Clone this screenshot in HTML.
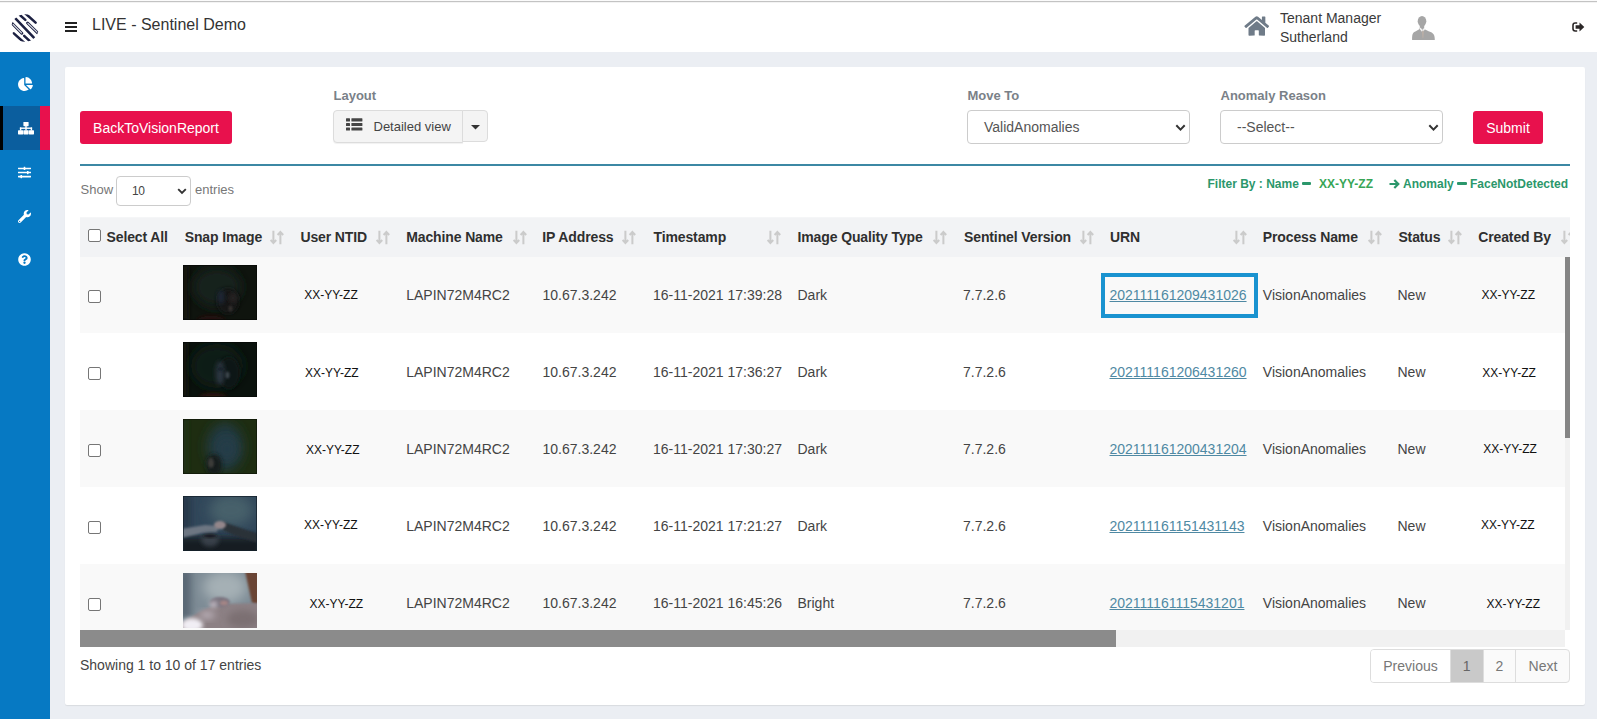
<!DOCTYPE html>
<html>
<head>
<meta charset="utf-8">
<title>LIVE - Sentinel Demo</title>
<style>
*{box-sizing:border-box;margin:0;padding:0}
html,body{width:1597px;height:719px;overflow:hidden}
body{font-family:"Liberation Sans",sans-serif;background:#ebeef3;color:#333;position:relative;font-size:14px}
.abs{position:absolute}
#topbar{left:0;top:0;width:1597px;height:52px;background:linear-gradient(#fbfbfb 0,#fbfbfb 1px,#c3c3c3 1px,#c3c3c3 2px,#f3f3f3 2px,#f3f3f3 3px,#fff 3px)}
#sidebar{left:0;top:52px;width:50px;height:667px;background:#0679c3}
#side-active{left:0;top:106px;width:50px;height:44px;background:#0b5e9e}
#side-active-l{left:0;top:106px;width:3px;height:44px;background:#000}
#side-active-r{left:40px;top:106px;width:10px;height:44px;background:#e8114d}
#card{left:65px;top:67px;width:1520px;height:638px;background:#fff;border-radius:2px;box-shadow:0 1px 1px rgba(0,0,0,.08)}
.title{left:92px;top:16.400px;font-size:16px;color:#333;white-space:nowrap}
.btn-red span{position:relative;top:1px}
.btn-red{background:#e8114d;color:#fff;border-radius:3px;font-size:14px;text-align:center;white-space:nowrap}
.lbl{font-size:13px;font-weight:bold;color:#7a8188;white-space:nowrap}
.sel{border:1px solid #ccc;border-radius:4px;background:#fff;color:#555;font-size:14px;white-space:nowrap}
.flt{top:177px;font-size:12px;line-height:14px;font-weight:bold;color:#2b976b;white-space:nowrap}
.hr{left:80px;top:164px;width:1490px;height:2px;background:#3c88a4}
.th{letter-spacing:-0.120px;font-size:14px;line-height:16px;font-weight:bold;color:#2f2f2f;white-space:nowrap;top:229.200px}
.td{font-size:14px;line-height:16px;color:#444;white-space:nowrap}
.nt{font-size:12px;line-height:14px;color:#111;white-space:nowrap}
.urn{font-size:14px;line-height:16px;color:#4f89a3;text-decoration:underline;white-space:nowrap}
.row{left:80px;width:1485px;height:77px}
.odd{background:#f9f9f9}
.even{background:#fff}
.cb{width:13px;height:13px;border:1px solid #767676;border-radius:2px;background:#fff}
.img{left:183px;width:74px;height:55px}
.pg{top:0;height:32px;line-height:32px;text-align:center;font-size:14px;color:#777}
.sort{top:229px;width:14px;height:16px}
</style>
</head>
<body>
<svg width="0" height="0" style="position:absolute"><defs>
<filter id="b2" x="-50%" y="-50%" width="200%" height="200%"><feGaussianBlur stdDeviation="2"/></filter>
<filter id="b3" x="-50%" y="-50%" width="200%" height="200%"><feGaussianBlur stdDeviation="3.500"/></filter>
<filter id="b5" x="-50%" y="-50%" width="200%" height="200%"><feGaussianBlur stdDeviation="6"/></filter>
<filter id="b1" x="-50%" y="-50%" width="200%" height="200%"><feGaussianBlur stdDeviation="1.200"/></filter>
</defs></svg>
<div id="topbar" class="abs"></div>
<div id="sidebar" class="abs"></div>
<div id="side-active" class="abs"></div>
<div id="side-active-l" class="abs"></div>
<div id="side-active-r" class="abs"></div>
<div id="card" class="abs"></div>
<div class="abs title">LIVE - Sentinel Demo</div>

<!-- logo -->
<svg class="abs" style="left:0;top:0" width="52" height="52" viewBox="0 0 52 52">
 <clipPath id="lg"><circle cx="25" cy="28" r="13.700"/></clipPath>
 <g clip-path="url(#lg)">
 <g stroke="#1d2142" stroke-width="2.500" stroke-linecap="round" fill="none">
  <line x1="25.200" y1="13.200" x2="35.600" y2="22.600"/>
  <line x1="18.800" y1="14" x2="25.300" y2="19.900"/>
  <line x1="14.200" y1="17.100" x2="36" y2="39.900"/>
  <line x1="24.200" y1="35.800" x2="30.900" y2="42.100"/>
  <line x1="13.800" y1="33.400" x2="24.200" y2="42.800"/>
 </g>
 <g stroke="#1d2142" stroke-width="2.900" stroke-linecap="round" fill="none">
  <line x1="27.600" y1="23" x2="39.200" y2="34.400"/>
  <line x1="10.900" y1="22.200" x2="21.800" y2="33.200"/>
 </g>
 <g stroke="#e4e6ee" stroke-width="1.100" stroke-linecap="round" fill="none">
  <line x1="27.900" y1="23.300" x2="37" y2="32.200"/>
  <line x1="13.100" y1="24.400" x2="21.500" y2="32.900"/>
 </g>
 </g>
</svg>
<!-- hamburger -->
<div class="abs" style="left:65px;top:22px;width:12px;height:2px;background:#222"></div>
<div class="abs" style="left:65px;top:26px;width:12px;height:2px;background:#222"></div>
<div class="abs" style="left:65px;top:30px;width:12px;height:2px;background:#222"></div>
<!-- home -->
<svg class="abs" style="left:1243.500px;top:15px" width="25.500" height="22" viewBox="0 0 576 512"><path fill="#6f7b88" d="M280.37 148.26L96 300.11V464a16 16 0 0 0 16 16l112.06-.29a16 16 0 0 0 15.92-16V368a16 16 0 0 1 16-16h64a16 16 0 0 1 16 16v95.64a16 16 0 0 0 16 16.05L464 480a16 16 0 0 0 16-16V300L295.67 148.26a12.19 12.19 0 0 0-15.3 0zM571.6 251.47L488 182.56V44.05a12 12 0 0 0-12-12h-56a12 12 0 0 0-12 12v72.61L318.47 43a48 48 0 0 0-61 0L4.34 251.47a12 12 0 0 0-1.6 16.9l25.5 31A12 12 0 0 0 45.15 301l235.22-193.74a12.19 12.19 0 0 1 15.3 0L530.9 301a12 12 0 0 0 16.9-1.6l25.5-31a12 12 0 0 0-1.7-16.93z"/></svg>
<div class="abs" style="left:1280px;top:9px;font-size:14px;line-height:19px;color:#3a3a3a;white-space:nowrap">Tenant Manager<br>Sutherland</div>
<!-- avatar -->
<svg class="abs" style="left:1411px;top:15px" width="26" height="26" viewBox="0 0 26 26">
 <g fill="#a6a6a6"><ellipse cx="11" cy="6.300" rx="4.300" ry="5.300"/><rect x="8.800" y="9" width="4.400" height="5"/>
 <path d="M1.100 24.900C1.100 20.500 1.300 18.300 3.300 17 5.300 15.800 8 15 8.900 13.200L13.100 13.200C14 15 16.800 15.800 19.600 17 22.800 18.300 23.800 20.500 23.800 24.900Z"/></g>
 <path fill="#fff" d="M8.600 13.900l2.500 3.200.9-1.600-2.500-3z M13.400 12.500l-2.500 3 .9 1.600 2.500-3.200z" opacity=".85"/>
 <path fill="#b9aea6" d="M11.400 15.600l1 0 .5 1.300-.5 5.600-.5.800-.5-.8-.5-5.600z"/>
</svg>
<!-- logout -->
<svg class="abs" style="left:1572px;top:22px" width="12.500" height="10" viewBox="0 0 12.500 10">
 <path fill="none" stroke="#2b2727" stroke-width="1.600" d="M5.200 1H3.200c-1.300 0-2.200.9-2.200 2.200v3.600c0 1.300.9 2.200 2.200 2.200h2"/>
 <path fill="#2b2727" d="M3.600 3.300h3.900V0.600L12.300 5l-4.800 4.400V6.700H3.600z"/>
</svg>


<svg class="abs" style="left:17.5px;top:76.5px" width="15" height="14" viewBox="0 0 544 512"><path fill="#fff" d="M527.79 288H290.5l158.03 158.03c6.040 6.040 15.980 6.530 22.190.680 38.700-36.460 65.320-85.610 73.130-140.860 1.340-9.460-6.510-17.850-16.060-17.850zm-15.830-64.800C503.720 103.740 408.260 8.280 288.800.040 279.680-.59 272 7.100 272 16.240V240h223.770c9.140 0 16.820-7.680 16.190-16.800zM224 288V50.710c0-9.550-8.390-17.400-17.840-16.060C86.990 51.490-4.100 155.600.14 280.370 4.500 408.510 114.830 513.590 243.030 511.980c50.400-.63 96.970-16.870 135.260-44.030 7.900-5.600 8.420-17.230 1.570-24.080L224 288z"/></svg>
<svg class="abs" style="left:17.500px;top:122px" width="16" height="12.500" viewBox="0 0 16 12.500"><g fill="#fff"><rect x="5.400" y="0" width="5.200" height="4.200" rx=".6"/><rect x="7.300" y="4" width="1.400" height="2.200"/><rect x="1.900" y="5.500" width="12.200" height="1.400"/><rect x="1.900" y="5.500" width="1.400" height="3"/><rect x="7.300" y="6" width="1.400" height="2.500"/><rect x="12.700" y="5.500" width="1.400" height="3"/><rect x="0" y="8.200" width="5.200" height="4.200" rx=".6"/><rect x="5.400" y="8.200" width="5.200" height="4.200" rx=".6"/><rect x="10.800" y="8.200" width="5.200" height="4.200" rx=".6"/></g></svg>
<svg class="abs" style="left:18px;top:166px" width="13" height="13" viewBox="0 0 512 512"><path fill="#fff" d="M496 384H160v-16c0-8.800-7.200-16-16-16h-32c-8.800 0-16 7.200-16 16v16H16c-8.800 0-16 7.200-16 16v32c0 8.800 7.200 16 16 16h80v16c0 8.800 7.200 16 16 16h32c8.800 0 16-7.200 16-16v-16h336c8.800 0 16-7.200 16-16v-32c0-8.800-7.200-16-16-16zm0-160h-80v-16c0-8.800-7.200-16-16-16h-32c-8.800 0-16 7.200-16 16v16H16c-8.800 0-16 7.200-16 16v32c0 8.800 7.200 16 16 16h336v16c0 8.800 7.200 16 16 16h32c8.800 0 16-7.200 16-16v-16h80c8.800 0 16-7.200 16-16v-32c0-8.800-7.200-16-16-16zm0-160H288V48c0-8.800-7.200-16-16-16h-32c-8.800 0-16 7.200-16 16v16H16C7.200 64 0 71.200 0 80v32c0 8.800 7.200 16 16 16h208v16c0 8.800 7.200 16 16 16h32c8.800 0 16-7.200 16-16v-16h208c8.800 0 16-7.200 16-16V80c0-8.800-7.200-16-16-16z"/></svg>
<svg class="abs" style="left:18px;top:210px" width="13" height="13" viewBox="0 0 512 512"><path fill="#fff" d="M507.730 109.100c-2.240-9.030-13.540-12.090-20.120-5.510l-74.360 74.360-67.880-11.310-11.310-67.880 74.360-74.360c6.620-6.620 3.430-17.900-5.660-20.160-47.380-11.740-99.550.91-136.580 37.930-39.640 39.640-50.550 97.100-34.050 147.200L18.740 402.760c-24.990 24.990-24.990 65.510 0 90.500 24.990 24.990 65.510 24.990 90.500 0l213.210-213.210c50.120 16.710 107.470 5.680 147.370-34.220 37.070-37.070 49.700-89.320 37.910-136.730zM64 472c-13.250 0-24-10.750-24-24 0-13.260 10.750-24 24-24s24 10.740 24 24c0 13.250-10.750 24-24 24z"/></svg>
<svg class="abs" style="left:18px;top:253px" width="13" height="13" viewBox="0 0 512 512"><path fill="#fff" d="M504 256c0 136.997-111.043 248-248 248S8 392.997 8 256C8 119.083 119.043 8 256 8s248 111.083 248 248zM262.655 90c-54.497 0-89.255 22.957-116.549 63.758-3.536 5.286-2.353 12.415 2.715 16.258l34.699 26.310c5.205 3.947 12.621 3.008 16.665-2.122 17.864-22.658 30.113-35.797 57.303-35.797 20.429 0 45.698 13.148 45.698 32.958 0 14.976-12.363 22.667-32.534 33.976C247.128 238.528 216 254.941 216 296v4c0 6.627 5.373 12 12 12h56c6.627 0 12-5.373 12-12v-1.333c0-28.462 83.186-29.647 83.186-106.667 0-58.002-60.165-102-116.531-102zM256 338c-25.365 0-46 20.635-46 46 0 25.364 20.635 46 46 46s46-20.636 46-46c0-25.365-20.635-46-46-46z"/></svg>


<div class="abs btn-red" style="left:80px;top:111px;width:152px;height:33px;line-height:33px" id="b1"><span id="b1t">BackToVisionReport</span></div>
<div class="abs lbl" style="left:333.500px;top:88px" id="l1">Layout</div>
<div class="abs" style="left:333px;top:110px;width:130px;height:33px;background:#f4f4f4;border:1px solid #dcdcdc;border-radius:4px 0 0 4px;box-shadow:0 1px 1px rgba(0,0,0,.06)"></div>
<div class="abs" style="left:462px;top:110px;width:26px;height:32px;background:#f4f4f4;border:1px solid #dcdcdc;border-radius:0 4px 4px 0"></div>
<svg class="abs" style="left:346px;top:118px" width="17" height="13" viewBox="0 0 17 13"><g fill="#444"><rect x="0" y="0.300" width="4" height="3.100" rx=".5"/><rect x="5.400" y="0.300" width="11" height="3.100" rx=".5"/><rect x="0" y="4.900" width="4" height="3.100" rx=".5"/><rect x="5.400" y="4.900" width="11" height="3.100" rx=".5"/><rect x="0" y="9.500" width="4" height="3.100" rx=".5"/><rect x="5.400" y="9.500" width="11" height="3.100" rx=".5"/></g></svg>
<div class="abs" style="left:373.500px;top:119px;font-size:13px;line-height:16px;color:#444;white-space:nowrap" id="dv">Detailed view</div>
<svg class="abs" style="left:470.500px;top:124.500px" width="9" height="5" viewBox="0 0 9 5"><path d="M0 0h9L4.500 4.600z" fill="#333"/></svg>
<div class="abs lbl" style="left:967.500px;top:88px" id="l2">Move To</div>
<div class="abs sel" style="left:967px;top:110px;width:223px;height:34px"></div>
<div class="abs" style="left:984px;top:118.500px;font-size:14px;line-height:17px;color:#555;white-space:nowrap" id="va">ValidAnomalies</div>
<svg class="abs" style="left:1174.5px;top:123.5px" width="11" height="8" viewBox="0 0 11 8"><path d="M1.300 1.300L5.500 5.600L9.700 1.300" fill="none" stroke="#333" stroke-width="2"/></svg>
<div class="abs lbl" style="left:1220.500px;top:88px" id="l3">Anomaly Reason</div>
<div class="abs sel" style="left:1220px;top:110px;width:223px;height:34px"></div>
<div class="abs" style="left:1237px;top:118.500px;font-size:14px;line-height:17px;color:#555;white-space:nowrap" id="se">--Select--</div>
<svg class="abs" style="left:1427.5px;top:123.5px" width="11" height="8" viewBox="0 0 11 8"><path d="M1.300 1.300L5.500 5.600L9.700 1.300" fill="none" stroke="#333" stroke-width="2"/></svg>
<div class="abs btn-red" style="left:1473px;top:111px;width:70px;height:33px;line-height:33px" id="b2"><span id="b2t">Submit</span></div>
<div class="abs hr"></div>
<div class="abs" style="left:80.500px;top:182px;font-size:13px;line-height:16px;color:#777;white-space:nowrap" id="sh">Show</div>
<div class="abs sel" style="left:116px;top:176px;width:75px;height:30px"></div>
<div class="abs" style="left:132px;top:183.500px;font-size:12px;line-height:14px;color:#444;white-space:nowrap" id="ten"><span style="letter-spacing:-0.400px">10</span></div>
<svg class="abs" style="left:176.500px;top:187.500px" width="10" height="7" viewBox="0 0 10 7"><path d="M1.200 1.200L5 5L8.800 1.200" fill="none" stroke="#333" stroke-width="1.900"/></svg>
<div class="abs" style="left:195px;top:182px;font-size:13px;line-height:16px;color:#777;white-space:nowrap" id="en">entries</div>
<div class="abs flt" style="left:1207.500px" id="f1">Filter By : Name</div>
<div class="abs" style="left:1301.500px;top:182px;width:9.500px;height:2.500px;background:#2b976b;border-radius:1px"></div>
<div class="abs flt" style="left:1319px;color:#38a556" id="f2">XX-YY-ZZ</div>
<svg class="abs" style="left:1389px;top:179px" width="11" height="10" viewBox="0 0 11 10"><path d="M0.500 5H9M5.300 1L9.300 5L5.300 9" fill="none" stroke="#2b976b" stroke-width="2.200"/></svg>
<div class="abs flt" style="left:1403px" id="f3">Anomaly</div>
<div class="abs" style="left:1457px;top:182px;width:9.500px;height:2.500px;background:#2b976b;border-radius:1px"></div>
<div class="abs flt" style="left:1470px" id="f4">FaceNotDetected</div>

<div class="abs" style="left:80px;top:217px;width:1490px;height:40px;background:linear-gradient(#f8f9fa 0,#f2f3f5 1px)"></div>
<div class="abs row odd" style="top:257px;height:76px"></div>
<div class="abs row even" style="top:333px;height:77px"></div>
<div class="abs row odd" style="top:410px;height:77px"></div>
<div class="abs row even" style="top:487px;height:77px"></div>
<div class="abs row odd" style="top:564px;height:66px"></div>
<div class="abs cb" style="left:88px;top:290.0px"></div>
<svg class="abs" style="left:183px;top:265px" width="74" height="55" viewBox="0 0 74 55"><clipPath id="cp0"><rect width="74" height="55"/></clipPath><g clip-path="url(#cp0)"><rect width="74" height="55" fill="#0f140e"/>
<rect x="-3" y="0" width="9" height="55" fill="#17180b" filter="url(#b2)"/>
<ellipse cx="34" cy="22" rx="24" ry="20" fill="#16201b" filter="url(#b5)"/>
<ellipse cx="45" cy="36" rx="11" ry="13" fill="#121617" filter="url(#b2)"/>
<ellipse cx="38" cy="32" rx="3.500" ry="7" fill="#1c2836" filter="url(#b2)"/>
<ellipse cx="50" cy="33" rx="4.500" ry="4.500" fill="#272120" filter="url(#b2)"/>
<ellipse cx="47.500" cy="43.500" rx="2" ry="3" fill="#34302f" filter="url(#b1)"/>
<ellipse cx="28" cy="56" rx="14" ry="5" fill="#28110d" filter="url(#b2)"/>
<rect x="0" y="0" width="74" height="55" fill="none" stroke="#080a07" stroke-width="1.500"/></g></svg>
<div class="abs nt" style="left:304.2px;top:288.2px" id="n0">XX-YY-ZZ</div>
<div class="abs td" style="left:406.200px;top:286.7px" id="m0">LAPIN72M4RC2</div>
<div class="abs td" style="left:542.500px;top:286.7px" id="ip0">10.67.3.242</div>
<div class="abs td" style="left:653px;top:286.7px" id="ts0">16-11-2021 17:39:28</div>
<div class="abs td" style="left:797.500px;top:286.7px" id="q0">Dark</div>
<div class="abs td" style="left:963px;top:286.7px" id="v0">7.7.2.6</div>
<div class="abs urn" style="left:1109.500px;top:286.7px" id="u0">202111161209431026</div>
<div class="abs td" style="left:1262.800px;top:286.7px" id="p0">VisionAnomalies</div>
<div class="abs td" style="left:1397.500px;top:286.7px" id="s0">New</div>
<div class="abs nt" style="left:1481.4px;top:288.2px" id="c0">XX-YY-ZZ</div>
<div class="abs cb" style="left:88px;top:367.0px"></div>
<svg class="abs" style="left:183px;top:342px" width="74" height="55" viewBox="0 0 74 55"><clipPath id="cp1"><rect width="74" height="55"/></clipPath><g clip-path="url(#cp1)"><rect width="74" height="55" fill="#0a120d"/>
<rect x="-3" y="0" width="8" height="55" fill="#13150a" filter="url(#b2)"/>
<ellipse cx="34" cy="24" rx="26" ry="22" fill="#0e1c16" filter="url(#b5)"/>
<ellipse cx="46" cy="31" rx="11" ry="16" fill="#0d1312" filter="url(#b2)"/>
<ellipse cx="37" cy="31" rx="4.500" ry="12" fill="#2a3641" filter="url(#b2)"/>
<ellipse cx="37.500" cy="27" rx="3" ry="2" fill="#18202a" filter="url(#b1)"/>
<ellipse cx="44.500" cy="33" rx="2" ry="3.500" fill="#3e464e" filter="url(#b1)"/>
<ellipse cx="30" cy="56" rx="14" ry="5" fill="#2d130e" filter="url(#b2)"/>
<rect x="0" y="0" width="74" height="55" fill="none" stroke="#070a07" stroke-width="1.500"/></g></svg>
<div class="abs nt" style="left:305.0px;top:365.7px" id="n1">XX-YY-ZZ</div>
<div class="abs td" style="left:406.200px;top:363.7px" id="m1">LAPIN72M4RC2</div>
<div class="abs td" style="left:542.500px;top:363.7px" id="ip1">10.67.3.242</div>
<div class="abs td" style="left:653px;top:363.7px" id="ts1">16-11-2021 17:36:27</div>
<div class="abs td" style="left:797.500px;top:363.7px" id="q1">Dark</div>
<div class="abs td" style="left:963px;top:363.7px" id="v1">7.7.2.6</div>
<div class="abs urn" style="left:1109.500px;top:363.7px" id="u1">202111161206431260</div>
<div class="abs td" style="left:1262.800px;top:363.7px" id="p1">VisionAnomalies</div>
<div class="abs td" style="left:1397.500px;top:363.7px" id="s1">New</div>
<div class="abs nt" style="left:1482.3px;top:365.7px" id="c1">XX-YY-ZZ</div>
<div class="abs cb" style="left:88px;top:444.0px"></div>
<svg class="abs" style="left:183px;top:419px" width="74" height="55" viewBox="0 0 74 55"><clipPath id="cp2"><rect width="74" height="55"/></clipPath><g clip-path="url(#cp2)"><rect width="74" height="55" fill="#1e2d11"/>
<ellipse cx="42" cy="28" rx="18" ry="24" fill="#223a44" filter="url(#b5)"/>
<ellipse cx="44" cy="30" rx="8" ry="10" fill="#253d48" filter="url(#b5)"/>
<rect x="-3" y="0" width="8" height="55" fill="#243212" filter="url(#b2)"/>
<ellipse cx="31" cy="46" rx="8" ry="11" fill="#191e1d" filter="url(#b2)"/>
<ellipse cx="28" cy="44" rx="3" ry="5" fill="#3a3b39" filter="url(#b1)"/>
<rect x="0" y="0" width="74" height="55" fill="none" stroke="#101808" stroke-width="1.500"/></g></svg>
<div class="abs nt" style="left:305.9px;top:442.7px" id="n2">XX-YY-ZZ</div>
<div class="abs td" style="left:406.200px;top:440.7px" id="m2">LAPIN72M4RC2</div>
<div class="abs td" style="left:542.500px;top:440.7px" id="ip2">10.67.3.242</div>
<div class="abs td" style="left:653px;top:440.7px" id="ts2">16-11-2021 17:30:27</div>
<div class="abs td" style="left:797.500px;top:440.7px" id="q2">Dark</div>
<div class="abs td" style="left:963px;top:440.7px" id="v2">7.7.2.6</div>
<div class="abs urn" style="left:1109.500px;top:440.7px" id="u2">202111161200431204</div>
<div class="abs td" style="left:1262.800px;top:440.7px" id="p2">VisionAnomalies</div>
<div class="abs td" style="left:1397.500px;top:440.7px" id="s2">New</div>
<div class="abs nt" style="left:1483.3px;top:442.2px" id="c2">XX-YY-ZZ</div>
<div class="abs cb" style="left:88px;top:521.0px"></div>
<svg class="abs" style="left:183px;top:496px" width="74" height="55" viewBox="0 0 74 55"><clipPath id="cp3"><rect width="74" height="55"/></clipPath><g clip-path="url(#cp3)"><rect width="74" height="55" fill="#31475a"/>
<ellipse cx="48" cy="14" rx="22" ry="16" fill="#47606a" filter="url(#b5)"/>
<rect x="-4" y="-2" width="12" height="36" fill="#25384a" filter="url(#b3)"/>
<rect x="-5" y="41" width="84" height="22" fill="#121b24" filter="url(#b3)"/>
<path d="M40 26L52 30L76 38L76 47L50 39L40 34z" fill="#2b3038" filter="url(#b1)"/>
<path d="M-2 33L22 29L36 30L34 36L20 37L-2 42z" fill="#6d7682" filter="url(#b1)"/>
<ellipse cx="37" cy="29" rx="6" ry="4" fill="#93868a" filter="url(#b1)"/>
<ellipse cx="27" cy="44" rx="9" ry="6.500" fill="#394048" filter="url(#b2)"/>
<ellipse cx="27" cy="40" rx="7" ry="1.500" fill="#14181d" filter="url(#b1)"/>
<rect x="0" y="0" width="74" height="55" fill="none" stroke="#16222c" stroke-width="1.500"/></g></svg>
<div class="abs nt" style="left:304.1px;top:518.0px" id="n3">XX-YY-ZZ</div>
<div class="abs td" style="left:406.200px;top:517.7px" id="m3">LAPIN72M4RC2</div>
<div class="abs td" style="left:542.500px;top:517.7px" id="ip3">10.67.3.242</div>
<div class="abs td" style="left:653px;top:517.7px" id="ts3">16-11-2021 17:21:27</div>
<div class="abs td" style="left:797.500px;top:517.7px" id="q3">Dark</div>
<div class="abs td" style="left:963px;top:517.7px" id="v3">7.7.2.6</div>
<div class="abs urn" style="left:1109.500px;top:517.7px" id="u3">202111161151431143</div>
<div class="abs td" style="left:1262.800px;top:517.7px" id="p3">VisionAnomalies</div>
<div class="abs td" style="left:1397.500px;top:517.7px" id="s3">New</div>
<div class="abs nt" style="left:1481.1px;top:517.7px" id="c3">XX-YY-ZZ</div>
<div class="abs cb" style="left:88px;top:598.0px"></div>
<svg class="abs" style="left:183px;top:573px" width="74" height="55" viewBox="0 0 74 55"><clipPath id="cp4"><rect width="74" height="55"/></clipPath><g clip-path="url(#cp4)"><rect width="74" height="55" fill="#7d8b95"/>
<ellipse cx="42" cy="14" rx="22" ry="16" fill="#a5b0b5" filter="url(#b5)"/>
<rect x="-6" y="-4" width="14" height="50" fill="#5a6874" filter="url(#b3)"/>
<path d="M62 -2L78 -2L78 33L69 30z" fill="#6b4534" filter="url(#b1)"/>
<path d="M-2 51L8 44L20 37L30 33L45 31L76 30L76 60L-2 60z" fill="#8c8084" filter="url(#b1)"/>
<ellipse cx="60" cy="46" rx="16" ry="9" fill="#7b6f72" filter="url(#b3)"/>
<ellipse cx="37" cy="29" rx="10" ry="5" fill="#7b7480" filter="url(#b1)"/>
<ellipse cx="30.500" cy="31.500" rx="4" ry="3.500" fill="#b9b1ba" filter="url(#b2)"/>
<ellipse cx="41" cy="30" rx="4" ry="2.500" fill="#a38485" filter="url(#b1)"/>
<ellipse cx="9" cy="52" rx="11" ry="7" fill="#f1eef4" filter="url(#b2)"/>
<ellipse cx="24" cy="42" rx="8" ry="4" fill="#b8aeb6" filter="url(#b3)"/></g></svg>
<div class="abs nt" style="left:309.5px;top:597.2px" id="n4">XX-YY-ZZ</div>
<div class="abs td" style="left:406.200px;top:594.7px" id="m4">LAPIN72M4RC2</div>
<div class="abs td" style="left:542.500px;top:594.7px" id="ip4">10.67.3.242</div>
<div class="abs td" style="left:653px;top:594.7px" id="ts4">16-11-2021 16:45:26</div>
<div class="abs td" style="left:797.500px;top:594.7px" id="q4">Bright</div>
<div class="abs td" style="left:963px;top:594.7px" id="v4">7.7.2.6</div>
<div class="abs urn" style="left:1109.500px;top:594.7px" id="u4">202111161115431201</div>
<div class="abs td" style="left:1262.800px;top:594.7px" id="p4">VisionAnomalies</div>
<div class="abs td" style="left:1397.500px;top:594.7px" id="s4">New</div>
<div class="abs nt" style="left:1486.4px;top:596.7px" id="c4">XX-YY-ZZ</div>
<div class="abs cb" style="left:88px;top:229px"></div>
<div class="abs th" style="left:106.5px" id="h0">Select All</div>
<div class="abs th" style="left:184.7px" id="h1">Snap Image</div>
<svg class="abs" style="left:270.2px;top:229.500px" width="15" height="15" viewBox="0 0 15 15"><g fill="none" stroke="#cbcbcb" stroke-width="2"><path d="M3.400 0.800V12.500M0.600 10L3.400 13L6.200 10"/><path d="M10.400 14.200V2.500M7.600 5L10.400 2L13.200 5"/></g></svg>
<div class="abs th" style="left:300.4px" id="h2">User NTID</div>
<svg class="abs" style="left:376px;top:229.500px" width="15" height="15" viewBox="0 0 15 15"><g fill="none" stroke="#cbcbcb" stroke-width="2"><path d="M3.400 0.800V12.500M0.600 10L3.400 13L6.200 10"/><path d="M10.400 14.200V2.500M7.600 5L10.400 2L13.200 5"/></g></svg>
<div class="abs th" style="left:406.2px" id="h3">Machine Name</div>
<svg class="abs" style="left:512.5px;top:229.500px" width="15" height="15" viewBox="0 0 15 15"><g fill="none" stroke="#cbcbcb" stroke-width="2"><path d="M3.400 0.800V12.500M0.600 10L3.400 13L6.200 10"/><path d="M10.400 14.200V2.500M7.600 5L10.400 2L13.200 5"/></g></svg>
<div class="abs th" style="left:542.3px" id="h4">IP Address</div>
<svg class="abs" style="left:622.3px;top:229.500px" width="15" height="15" viewBox="0 0 15 15"><g fill="none" stroke="#cbcbcb" stroke-width="2"><path d="M3.400 0.800V12.500M0.600 10L3.400 13L6.200 10"/><path d="M10.400 14.200V2.500M7.600 5L10.400 2L13.200 5"/></g></svg>
<div class="abs th" style="left:653.5px" id="h5">Timestamp</div>
<svg class="abs" style="left:767px;top:229.500px" width="15" height="15" viewBox="0 0 15 15"><g fill="none" stroke="#cbcbcb" stroke-width="2"><path d="M3.400 0.800V12.500M0.600 10L3.400 13L6.200 10"/><path d="M10.400 14.200V2.500M7.600 5L10.400 2L13.200 5"/></g></svg>
<div class="abs th" style="left:797.5px" id="h6">Image Quality Type</div>
<svg class="abs" style="left:932.6px;top:229.500px" width="15" height="15" viewBox="0 0 15 15"><g fill="none" stroke="#cbcbcb" stroke-width="2"><path d="M3.400 0.800V12.500M0.600 10L3.400 13L6.200 10"/><path d="M10.400 14.200V2.500M7.600 5L10.400 2L13.200 5"/></g></svg>
<div class="abs th" style="left:964px" id="h7">Sentinel Version</div>
<svg class="abs" style="left:1080px;top:229.500px" width="15" height="15" viewBox="0 0 15 15"><g fill="none" stroke="#cbcbcb" stroke-width="2"><path d="M3.400 0.800V12.500M0.600 10L3.400 13L6.200 10"/><path d="M10.400 14.200V2.500M7.600 5L10.400 2L13.200 5"/></g></svg>
<div class="abs th" style="left:1110px" id="h8">URN</div>
<svg class="abs" style="left:1232.5px;top:229.500px" width="15" height="15" viewBox="0 0 15 15"><g fill="none" stroke="#cbcbcb" stroke-width="2"><path d="M3.400 0.800V12.500M0.600 10L3.400 13L6.200 10"/><path d="M10.400 14.200V2.500M7.600 5L10.400 2L13.200 5"/></g></svg>
<div class="abs th" style="left:1262.8px" id="h9">Process Name</div>
<svg class="abs" style="left:1368px;top:229.500px" width="15" height="15" viewBox="0 0 15 15"><g fill="none" stroke="#cbcbcb" stroke-width="2"><path d="M3.400 0.800V12.500M0.600 10L3.400 13L6.200 10"/><path d="M10.400 14.200V2.500M7.600 5L10.400 2L13.200 5"/></g></svg>
<div class="abs th" style="left:1398.4px" id="h10">Status</div>
<svg class="abs" style="left:1448px;top:229.500px" width="15" height="15" viewBox="0 0 15 15"><g fill="none" stroke="#cbcbcb" stroke-width="2"><path d="M3.400 0.800V12.500M0.600 10L3.400 13L6.200 10"/><path d="M10.400 14.200V2.500M7.600 5L10.400 2L13.200 5"/></g></svg>
<div class="abs th" style="left:1478.2px" id="h11">Created By</div>
<svg class="abs" style="left:1561.2px;top:229.500px" width="15" height="15" viewBox="0 0 15 15"><g fill="none" stroke="#cbcbcb" stroke-width="2"><path d="M3.400 0.800V12.500M0.600 10L3.400 13L6.200 10"/><path d="M10.400 14.200V2.500M7.600 5L10.400 2L13.200 5"/></g></svg>
<div class="abs" style="left:1101px;top:273px;width:157px;height:45px;border:4px solid #1a93d0"></div>
<div class="abs" style="left:1570px;top:210px;width:15px;height:440px;background:#fff"></div>
<div class="abs" style="left:1565px;top:256.500px;width:5px;height:373.500px;background:#f1f1f1"></div>
<div class="abs" style="left:1565px;top:256.500px;width:5px;height:181px;background:#858585"></div>
<div class="abs" style="left:80px;top:630px;width:1485px;height:17px;background:#f1f1f1"></div>
<div class="abs" style="left:80px;top:630px;width:1036px;height:17px;background:#8b8b8b"></div>

<div class="abs" style="left:80px;top:657px;font-size:14px;line-height:16px;color:#444;white-space:nowrap" id="showing">Showing 1 to 10 of 17 entries</div>
<div class="abs" style="left:1370px;top:649px;width:200px;height:34px;border:1px solid #ddd;border-radius:4px;background:#fafafa;overflow:hidden">
 <div class="abs pg" style="left:0;width:79px;background:#fff">Previous</div>
 <div class="abs pg" style="left:79px;width:32.500px;background:#c9c9c9;border-left:1px solid #ddd;color:#666">1</div>
 <div class="abs pg" style="left:111.500px;width:33px;border-left:1px solid #ddd">2</div>
 <div class="abs pg" style="left:144px;width:55px;border-left:1px solid #ddd">Next</div>
</div>

</body>
</html>
